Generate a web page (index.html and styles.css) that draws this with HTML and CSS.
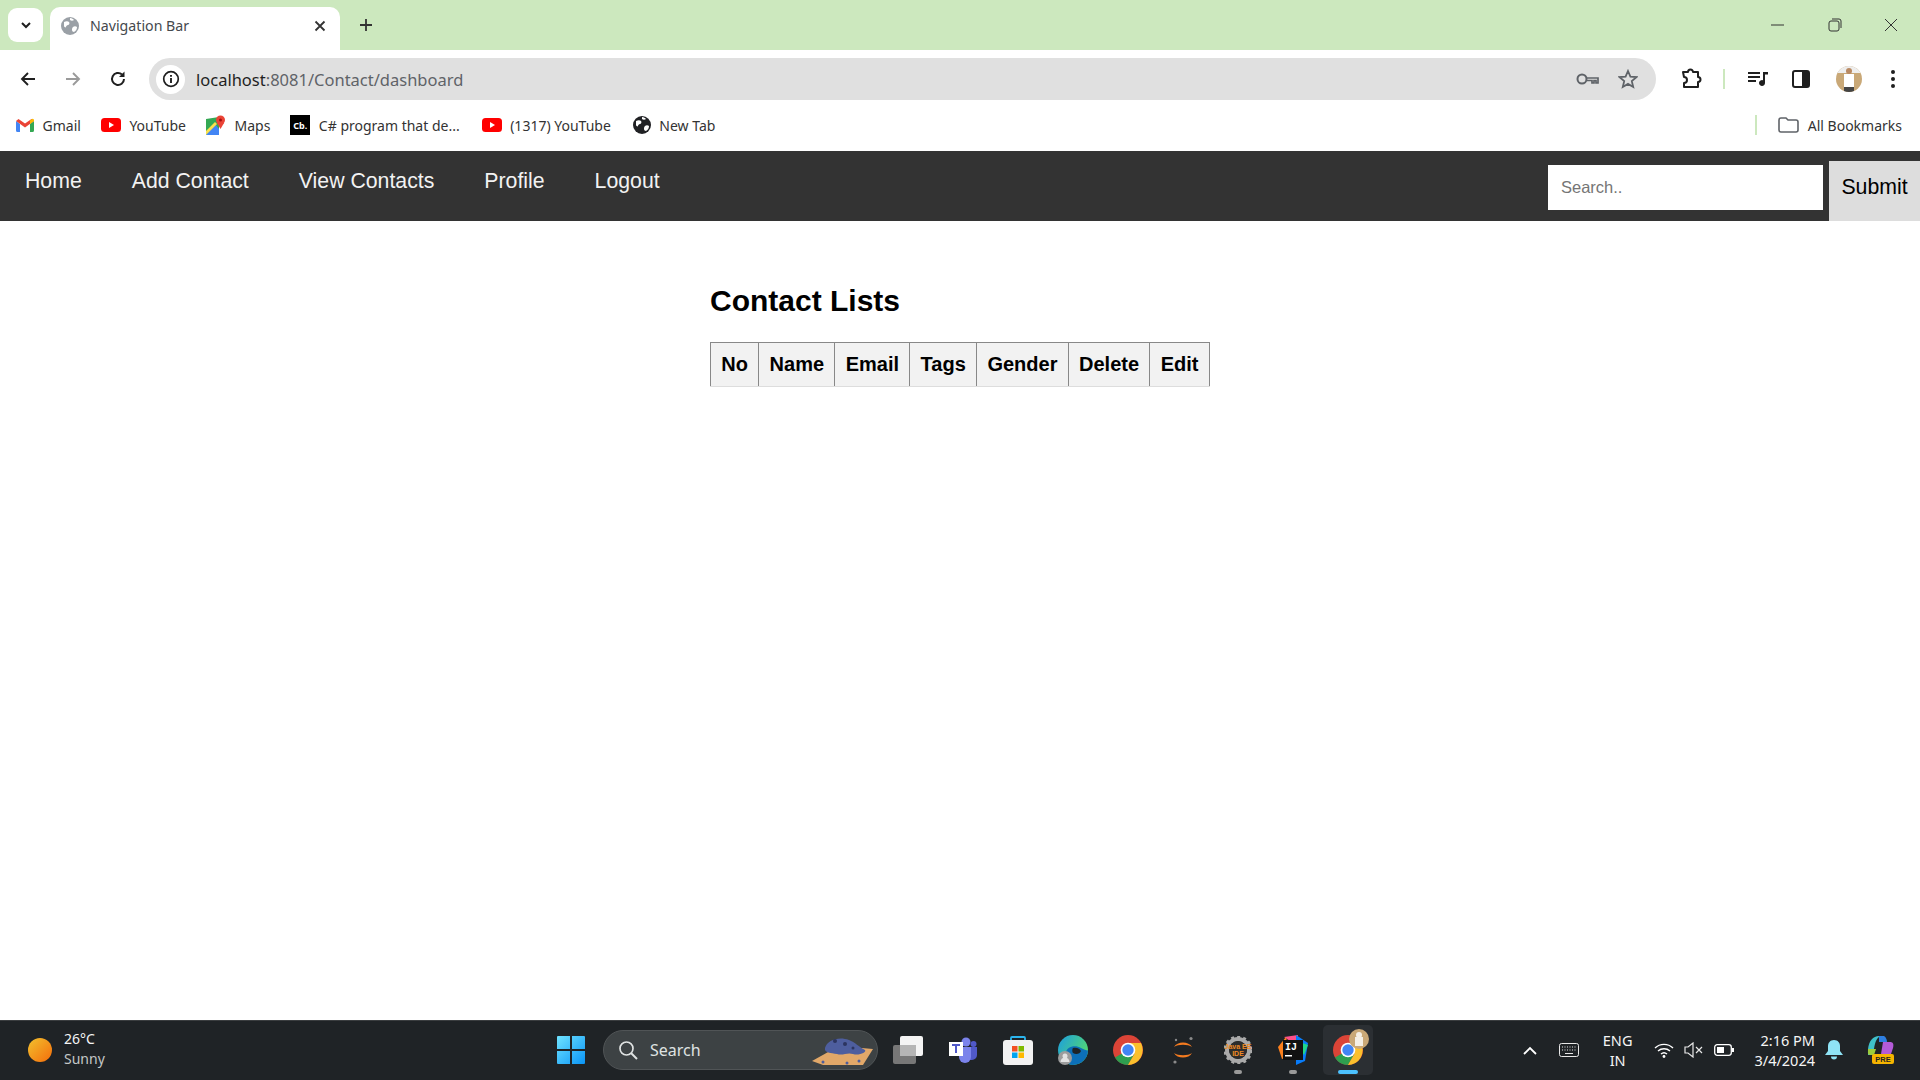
FILE: index.html
```html
<!DOCTYPE html>
<html lang="en">
<head>
  <meta charset="UTF-8">
  <title>Navigation Bar</title>
  <link rel="stylesheet" href="styles.css">
</head>
<body>

<svg class="defs" width="0" height="0">
  <symbol id="yt" viewBox="0 0 20 14">
    <rect width="20" height="14" rx="3.5" fill="#f00"/>
    <path d="M8 4l5 3-5 3z" fill="#fff"/>
  </symbol>
  <symbol id="chrome" viewBox="0 0 30 30">
    <circle cx="15" cy="15" r="15" fill="#db4437"/>
    <path d="M8.5 18.7L2 22.5A15 15 0 0 0 15 30l6.5-11.3z" fill="#2e9e4f"/>
    <path d="M15 8h13a15 15 0 0 1-13 22l6.500-11.300z" fill="#fbc02d"/>
    <circle cx="15" cy="15" r="7.3" fill="#fff"/>
    <circle cx="15" cy="15" r="5.7" fill="#4285f4"/>
  </symbol>
  <symbol id="globe" viewBox="0 0 18 18">
    <circle cx="9" cy="9" r="9"/>
    <path d="M3 5c2-1 4-1 5 0s0 3-1 3-2 1-2 2-2 0-2-1zM12 10c1-1 3-1 4 0 0 2-1 4-3 5-1 0-2-1-2-2s0-2 1-3zM9 1c2 0 3 1 4 2-1 1-3 1-4 0z" fill="#fff"/>
  </symbol>
</svg>

<div class="tabstrip">
  <div class="tab-search">
    <svg width="14" height="14" viewBox="0 0 14 14"><path d="M3 5l4 4 4-4" fill="none" stroke="#1f1f1f" stroke-width="2"/></svg>
  </div>
  <div class="tab">
    <svg class="tab-icon" width="18" height="18"><use href="#globe"/></svg>
    <span class="tab-title">Navigation Bar</span>
    <svg class="tab-close" width="12" height="12" viewBox="0 0 12 12"><path d="M1.5 1.5l9 9M10.5 1.5l-9 9" stroke="#333" stroke-width="1.8"/></svg>
  </div>
  <svg class="tab-new" width="14" height="14" viewBox="0 0 14 14"><path d="M7 1v12M1 7h12" stroke="#333" stroke-width="1.8"/></svg>
  <div class="window-btns">
    <svg width="14" height="14" viewBox="0 0 14 14"><path d="M0 7h13" stroke="#333"/></svg>
    <svg width="14" height="14" viewBox="0 0 14 14"><rect x="1" y="3" width="10" height="10" rx="2" fill="none" stroke="#333"/><path d="M4 1h7a2 2 0 0 1 2 2v7" fill="none" stroke="#333"/></svg>
    <svg width="14" height="14" viewBox="0 0 14 14"><path d="M1 1l12 12M13 1L1 13" stroke="#333"/></svg>
  </div>
</div>

<div class="toolbar">
  <svg class="tool-icon" width="18" height="18" viewBox="0 0 18 18"><path d="M16 9H3M9 3L3 9l6 6" fill="none" stroke="#1f1f1f" stroke-width="1.9"/></svg>
  <svg class="tool-icon" width="18" height="18" viewBox="0 0 18 18"><path d="M2 9h13M9 3l6 6-6 6" fill="none" stroke="#9a9a9a" stroke-width="1.9"/></svg>
  <svg class="tool-icon" width="18" height="18" viewBox="0 0 18 18"><path d="M15 9a6 6 0 1 1-2-4.500" fill="none" stroke="#1f1f1f" stroke-width="2"/><path d="M15.5 1.5V7H10z" fill="#1f1f1f"/></svg>
  <div class="omnibox">
    <div class="site-info">
      <svg width="18" height="18" viewBox="0 0 18 18"><circle cx="9" cy="9" r="7.3" fill="none" stroke="#1f1f1f" stroke-width="1.7"/><path d="M9 8v5M9 5v1.800" stroke="#1f1f1f" stroke-width="1.9"/></svg>
    </div>
    <div class="url"><span class="url-host">localhost</span>:8081/Contact/dashboard</div>
    <svg class="omni-key" width="23" height="14" viewBox="0 0 23 14"><circle cx="6" cy="7" r="4.5" fill="none" stroke="#5f6368" stroke-width="2"/><path d="M10.5 6H22v5h-2V8.500h-2V11h-2V8.500h-5.500" fill="none" stroke="#5f6368" stroke-width="1.7"/></svg>
    <svg class="omni-star" width="20" height="20" viewBox="0 0 20 20"><path d="M10 2l2.400 5.600 6 .5-4.600 4 1.400 5.900L10 14.900 4.800 18l1.400-5.900-4.600-4 6-.5z" fill="none" stroke="#5f6368" stroke-width="1.8"/></svg>
  </div>
  <div class="tool-right">
    <svg class="ext" width="22" height="22" viewBox="0 0 22 22"><path d="M3 4h5a2.500 2.500 0 0 1 5 0h5v5a2.500 2.500 0 0 1 0 5v5H4v-4a2.500 2.500 0 0 0 0-6z" fill="none" stroke="#1f1f1f" stroke-width="2" stroke-linejoin="round"/></svg>
    <span class="tool-sep"></span>
    <svg class="media" width="20" height="16" viewBox="0 0 20 16"><path d="M0 2h12M0 6h12M0 10h8" stroke="#1f1f1f" stroke-width="1.8"/><path d="M15 1h5v2.500h-3V12a3 3 0 1 1-2-2.800z" fill="#1f1f1f"/></svg>
    <svg class="panel" width="18" height="18" viewBox="0 0 18 18"><rect x="1" y="1" width="16" height="16" rx="2" fill="#fff" stroke="#1f1f1f" stroke-width="2"/><path d="M10 1h5a2 2 0 0 1 2 2v12a2 2 0 0 1-2 2h-5z" fill="#1f1f1f"/></svg>
    <svg class="avatar" width="26" height="26" viewBox="0 0 26 26"><defs><clipPath id="av"><circle cx="13" cy="13" r="13"/></clipPath></defs><g clip-path="url(#av)"><rect width="26" height="26" fill="#c9a877"/><rect width="26" height="7" fill="#eee"/><rect x="8" y="8" width="10" height="13" fill="#fff"/><circle cx="13" cy="5" r="3" fill="#b98a63"/><rect x="8" y="21" width="10" height="5" fill="#444"/></g></svg>
    <svg class="kebab" width="6" height="20" viewBox="0 0 6 20"><circle cx="3" cy="3" r="2" fill="#1f1f1f"/><circle cx="3" cy="10" r="2" fill="#1f1f1f"/><circle cx="3" cy="17" r="2" fill="#1f1f1f"/></svg>
  </div>
</div>

<div class="bookmarks">
  <a class="bm">
    <svg width="18" height="14" viewBox="0 0 18 14"><path d="M0 3v9.500A1.500 1.500 0 0 0 1.500 14H4V6z" fill="#4285f4"/><path d="M18 3v9.500a1.500 1.500 0 0 1-1.500 1.500H14V6z" fill="#34a853"/><path d="M0 3l9 6.500L18 3 15.500 1 9 5.500 2.500 1z" fill="#ea4335"/><path d="M14 2.500L16 1a1.300 1.300 0 0 1 2 1v1l-4 3z" fill="#fbbc04"/></svg>
    Gmail
  </a>
  <a class="bm"><svg width="20" height="14"><use href="#yt"/></svg>YouTube</a>
  <a class="bm">
    <svg width="20" height="20" viewBox="0 0 20 20"><path d="M0 4l13-2v16L0 20z" fill="#34a853"/><path d="M0 20L9 9l4 5v6z" fill="#4285f4"/><path d="M0 16L9 7l2 2-11 11z" fill="#fbe04d"/><circle cx="14.5" cy="5" r="4.5" fill="#ea4335"/><path d="M11 8l3.500 6 3.500-6z" fill="#ea4335"/><circle cx="14.5" cy="5" r="1.5" fill="#a50e0e"/></svg>
    Maps
  </a>
  <a class="bm bm-wide"><span class="cb-icon">Cb.</span>C# program that de...</a>
  <a class="bm bm-wide"><svg width="20" height="14"><use href="#yt"/></svg>(1317) YouTube</a>
  <a class="bm"><svg class="globe-dark" width="18" height="18"><use href="#globe"/></svg>New Tab</a>
  <span class="bm-sep"></span>
  <a class="bm bm-all">
    <svg width="21" height="16" viewBox="0 0 21 16"><path d="M1 3a2 2 0 0 1 2-2h5l2 2h8a2 2 0 0 1 2 2v8a2 2 0 0 1-2 2H3a2 2 0 0 1-2-2z" fill="none" stroke="#5f6368" stroke-width="1.6"/></svg>
    All Bookmarks
  </a>
</div>

<div class="topnav">
  <a href="#">Home</a>
  <a href="#">Add Contact</a>
  <a href="#">View Contacts</a>
  <a href="#">Profile</a>
  <a href="#">Logout</a>
  <form class="search-form">
    <input type="text" placeholder="Search..">
    <button type="button">Submit</button>
  </form>
</div>

<div class="content">
  <h2>Contact Lists</h2>
  <table>
    <tr>
      <th>No</th>
      <th>Name</th>
      <th>Email</th>
      <th>Tags</th>
      <th>Gender</th>
      <th>Delete</th>
      <th>Edit</th>
    </tr>
  </table>
</div>

<div class="taskbar">
  <div class="weather">
    <span class="sun"></span>
    <div class="weather-text">
      <div>26°C</div>
      <div class="weather-sub">Sunny</div>
    </div>
  </div>

  <div class="task-center">
    <div class="task-slot">
      <svg width="30" height="30" viewBox="0 0 30 30">
        <defs><linearGradient id="win" x1="0" y1="0" x2="1" y2="1"><stop offset="0" stop-color="#6fe3ff"/><stop offset="1" stop-color="#0a94f5"/></linearGradient></defs>
        <path d="M1 2a1 1 0 0 1 1-1h12v13H1zM16 1h12a1 1 0 0 1 1 1v12H16zM1 16h13v13H2a1 1 0 0 1-1-1zM16 16h13v12a1 1 0 0 1-1 1H16z" fill="url(#win)"/>
      </svg>
    </div>
    <div class="task-search">
      <svg width="20" height="20" viewBox="0 0 20 20"><circle cx="8.5" cy="8.5" r="6.5" fill="none" stroke="#dfe2e2" stroke-width="1.7"/><path d="M13 13l6 6" stroke="#dfe2e2" stroke-width="1.9"/></svg>
      <span>Search</span>
      <svg class="pebble" width="64" height="32" viewBox="0 0 64 32">
        <path d="M1 27L28 12l34 3-10 16H12z" fill="#e2a869"/>
        <path d="M14 14c2-8 14-12 24-8 6 2 10 7 16 10 2 2-6 6-12 4-6-2-10 2-16 0-6-1-13-1-12-6z" fill="#4e5e9e"/>
        <circle cx="24" cy="7" r="2" fill="#2c3560"/><circle cx="34" cy="10" r="2" fill="#2c3560"/><circle cx="42" cy="14" r="1.5" fill="#2c3560"/>
        <circle cx="12" cy="28" r="1.5" fill="#4e5e9e"/><circle cx="36" cy="29" r="1.5" fill="#4e5e9e"/><circle cx="48" cy="27" r="1.5" fill="#4e5e9e"/>
      </svg>
    </div>
    <div class="task-slot">
      <svg width="30" height="28" viewBox="0 0 30 28">
        <rect x="0" y="9" width="23" height="19" rx="2" fill="#777"/>
        <rect x="7" y="0" width="23" height="20" rx="2" fill="#f4f4f4"/>
        <rect x="7" y="9" width="16" height="11" fill="#b5b5b5"/>
      </svg>
    </div>
    <div class="task-slot">
      <svg width="28" height="26" viewBox="0 0 28 26">
        <circle cx="17" cy="5" r="4.500" fill="#7b83eb"/><circle cx="24.500" cy="7" r="3" fill="#5059c9"/>
        <path d="M11 10h17v8a5 5 0 0 1-5 5h-2a7 7 0 0 1-10-5z" fill="#5059c9"/>
        <path d="M10 10h12v10a6 6 0 0 1-12 0z" fill="#7b83eb"/>
        <rect x="0" y="5" width="14" height="14" fill="#fff"/>
        <path d="M3 8h8M7 8v8" stroke="#5059c9" stroke-width="2"/>
      </svg>
    </div>
    <div class="task-slot">
      <svg width="30" height="30" viewBox="0 0 30 30">
        <path d="M8 7V3a1 1 0 0 1 1-1h12a1 1 0 0 1 1 1v4" fill="none" stroke="#2bb5ee" stroke-width="1.8"/>
        <rect x="0" y="5" width="30" height="25" rx="3" fill="#f2f2f2"/>
        <rect x="9" y="11" width="5.5" height="5.5" fill="#f25022"/><rect x="15.5" y="11" width="5.5" height="5.5" fill="#7fba00"/>
        <rect x="9" y="17.5" width="5.5" height="5.5" fill="#00a4ef"/><rect x="15.5" y="17.5" width="5.5" height="5.5" fill="#ffb900"/>
      </svg>
    </div>
    <div class="task-slot">
      <svg width="30" height="30" viewBox="0 0 30 30">
        <defs><linearGradient id="edge" x1="0" y1="0" x2="1" y2="0.6"><stop offset="0" stop-color="#1b9de2"/><stop offset="1" stop-color="#54d96e"/></linearGradient></defs>
        <circle cx="15" cy="15" r="15" fill="url(#edge)"/>
        <path d="M8 18c0-6 9-9 15-5 4 2 7 3 7 2a15 15 0 0 1-15 15C8 30 8 24 8 18z" fill="#0c6fb8"/>
        <path d="M15 13c4-1 7 1 8 3-1 3-5 4-8 2-1-1-1-4 0-5z" fill="#1f2326"/>
        <circle cx="7" cy="23" r="7" fill="#9c9c9c"/><circle cx="7" cy="21" r="2.500" fill="#e2e2e2"/><path d="M2.500 27a4.500 4.500 0 0 1 9 0z" fill="#e2e2e2"/>
      </svg>
    </div>
    <div class="task-slot"><svg width="30" height="30"><use href="#chrome"/></svg></div>
    <div class="task-slot">
      <svg width="22" height="28" viewBox="0 0 22 28">
        <path d="M2 11c3-6 15-6 18 0-4-3-14-3-18 0zM2 17c4 3 14 3 18 0-3 6-15 6-18 0z" fill="#f47b20"/>
        <circle cx="19" cy="2.500" r="1.6" fill="#8a8a8a"/><circle cx="4" cy="4" r="1.2" fill="#8a8a8a"/><circle cx="3" cy="26" r="1.6" fill="#8a8a8a"/>
      </svg>
    </div>
    <div class="task-slot running">
      <svg width="28" height="28" viewBox="0 0 28 28">
        <circle cx="14" cy="14" r="11" fill="none" stroke="#aaa" stroke-width="4"/>
        <circle cx="14" cy="14" r="13" fill="none" stroke="#aaa" stroke-width="3" stroke-dasharray="3 3"/>
        <circle cx="14" cy="14" r="9" fill="#2c2c2c"/>
        <text x="14" y="12.500" class="ee-text">Java EE</text>
        <text x="14" y="20" class="ee-text">IDE</text>
      </svg>
    </div>
    <div class="task-slot running">
      <svg width="30" height="30" viewBox="0 0 30 30">
        <path d="M6 2L20 0l-2 10z" fill="#ff4f8b"/><path d="M0 12L8 2l4 20-8 2z" fill="#fc801d"/><path d="M18 0l12 8-3 18-9 4z" fill="#087cfa"/><path d="M16 5l14 5-4 10z" fill="#21d789"/>
        <rect x="5" y="5" width="20" height="20" fill="#111"/>
        <text x="7" y="15" class="ij-text">IJ</text>
        <rect x="7" y="20" width="7" height="1.500" fill="#fff"/>
      </svg>
    </div>
    <div class="task-slot active">
      <svg width="30" height="30"><use href="#chrome"/></svg>
      <svg class="chrome-badge" width="20" height="20" viewBox="0 0 20 20"><circle cx="10" cy="10" r="10" fill="#c9a877"/><rect x="6" y="8" width="8" height="9" fill="#f4efe6"/><circle cx="10" cy="6" r="3" fill="#f4efe6"/></svg>
    </div>
  </div>

  <div class="tray">
    <svg class="tray-chev" width="14" height="9" viewBox="0 0 14 9"><path d="M1 8l6-6 6 6" fill="none" stroke="#fff" stroke-width="1.8"/></svg>
    <svg class="tray-kbd" width="20" height="14" viewBox="0 0 20 14"><rect x=".5" y=".5" width="19" height="13" rx="2" fill="none" stroke="#e8e8e8"/><path d="M3 4h14M3 7h14" stroke="#e8e8e8" stroke-dasharray="1 1.500"/><path d="M6 10.500h8" stroke="#e8e8e8"/></svg>
    <div class="tray-lang">ENG<br>IN</div>
    <svg class="tray-wifi" width="20" height="16" viewBox="0 0 20 16"><path d="M1 6a13 13 0 0 1 18 0M4 9a9 9 0 0 1 12 0M7 12a4.500 4.500 0 0 1 6 0" fill="none" stroke="#fff" stroke-width="1.4"/><circle cx="10" cy="14.500" r="1.400" fill="#fff"/></svg>
    <svg class="tray-mute" width="20" height="16" viewBox="0 0 20 16"><path d="M1 5h3l5-4v14l-5-4H1z" fill="none" stroke="#e8e8e8" stroke-width="1.2"/><path d="M12 5l6 6M18 5l-6 6" stroke="#e8e8e8" stroke-width="1.2"/></svg>
    <svg class="tray-batt" width="20" height="12" viewBox="0 0 20 12"><rect x=".7" y=".7" width="16.600" height="10.600" rx="2.500" fill="none" stroke="#fff" stroke-width="1.3"/><rect x="3" y="3" width="7" height="6" fill="#fff"/><rect x="18" y="4" width="2" height="4" fill="#fff"/></svg>
    <div class="tray-clock">2:16 PM<br>3/4/2024</div>
    <svg class="tray-bell" width="18" height="20" viewBox="0 0 18 20"><path d="M9 0c4 0 6 3 6 6v5l3 4H0l3-4V6c0-3 2-6 6-6z" fill="#8fe3f5"/><path d="M6 16.500h6a3 3 0 0 1-6 0z" fill="#8fe3f5"/></svg>
    <svg class="tray-copilot" width="30" height="30" viewBox="0 0 30 30">
      <path d="M3 14C4 6 8 1 14 1l2 0c-4 1-6 6-7 13-1 5-2 6-6 6z" fill="#3fc1c9"/>
      <path d="M3 14c0 6-1 6 6 6l2-6z" fill="#9ccc3c"/>
      <path d="M14 1h5c2 1 3 4 3 6l-8 0z" fill="#2e7fe0"/>
      <path d="M18 7h7c3 0 4 2 3 6l-2 6H16z" fill="#b45bd8"/>
      <rect x="7" y="19" width="22" height="10" rx="2" fill="#f5b400"/>
      <text x="18" y="27" class="pre-text">PRE</text>
    </svg>
  </div>
</div>

</body>
</html>
```

FILE: styles.css
```css
* {
  box-sizing: border-box;
}

html, body {
  margin: 0;
  height: 1080px;
  overflow: hidden;
}

body {
  display: flex;
  flex-direction: column;
  background: white;
  font-family: "Liberation Sans", Arial, sans-serif;
}

.defs {
  position: absolute;
}

/* browser window */
.tabstrip {
  height: 50px;
  background: #cce8be;
  display: flex;
  align-items: flex-end;
  flex-shrink: 0;
}

.tab-search {
  width: 35px;
  height: 34px;
  margin: 0 7px 8px 8px;
  background: white;
  border-radius: 9px;
  display: flex;
  align-items: center;
  justify-content: center;
}

.tab {
  width: 290px;
  height: 43px;
  padding: 0 14px 6px 11px;
  background: white;
  border-radius: 10px 10px 0 0;
  display: flex;
  align-items: center;
  font-family: "Noto Sans", sans-serif;
  font-size: 14.2px;
  color: #45494e;
}

.tab-icon {
  fill: #9aa0a6;
  margin-right: 11px;
}

.tab-title {
  flex: 1;
}

.tab-new {
  margin: 0 0 18px 19px;
}

.window-btns {
  margin-left: auto;
  width: 149px;
  height: 50px;
  padding: 18px 22px 0 0;
  display: flex;
  justify-content: space-between;
  align-self: flex-start;
}

.toolbar {
  height: 50px;
  padding: 8px 0 0 19px;
  background: white;
  border-radius: 8px 8px 0 0;
  display: flex;
  align-items: flex-start;
  flex-shrink: 0;
}

.tool-icon {
  margin: 12px 27px 0 0;
}

.tool-icon:nth-child(3) {
  margin-right: 0;
}

.omnibox {
  margin-left: 22px;
  width: 1507px;
  height: 42px;
  background: #e0e0e0;
  border-radius: 21px;
  padding: 0 18px 0 7px;
  display: flex;
  align-items: center;
}

.site-info {
  width: 29px;
  height: 29px;
  background: white;
  border-radius: 50%;
  display: flex;
  align-items: center;
  justify-content: center;
  margin-right: 11px;
}

.url {
  flex: 1;
  font-family: "Noto Sans", sans-serif;
  font-size: 16.5px;
  color: #5f6368;
}

.url-host {
  color: #1f1f1f;
}

.omni-star {
  margin-left: 19px;
}

.tool-right {
  flex: 1;
  display: flex;
  align-items: center;
  height: 42px;
}

.ext {
  margin-left: 24px;
}

.tool-sep {
  width: 2px;
  height: 20px;
  background: #cce8be;
  margin: 0 23px 0 21px;
}

.panel {
  margin-left: 24px;
}

.avatar {
  margin-left: 26px;
}

.kebab {
  margin-left: 28px;
}

.bookmarks {
  height: 51px;
  padding: 0 18px 1px 16px;
  background: white;
  display: flex;
  align-items: center;
  flex-shrink: 0;
  font-family: "Noto Sans", sans-serif;
  font-size: 14px;
  color: #333;
}

.bm {
  display: flex;
  align-items: center;
  gap: 8.5px;
  margin-right: 20px;
  white-space: nowrap;
}

.bm-wide {
  margin-right: 22px;
}

.cb-icon {
  width: 20px;
  height: 20px;
  background: black;
  color: white;
  font-size: 9px;
  font-weight: bold;
  display: flex;
  align-items: center;
  justify-content: center;
}

.globe-dark {
  fill: #202124;
}

.bm-sep {
  margin-left: auto;
  width: 2px;
  height: 20px;
  background: #cce8be;
  margin-right: 21px;
}

.bm-all {
  margin-right: 0;
}

/* the actual page */
.topnav {
  height: 70px;
  background-color: #333;
  display: flex;
  flex-shrink: 0;
}

.topnav a {
  padding: 18px 25px;
  color: #f2f2f2;
  font-size: 21.28px;
  text-decoration: none;
}

.search-form {
  margin-left: auto;
  display: flex;
  align-items: flex-start;
  padding-top: 10px;
}

.search-form input {
  width: 275px;
  height: 45px;
  margin: 4px 6px 0 0;
  padding: 0 13px;
  border: none;
  font-family: inherit;
  font-size: 16.5px;
}

.search-form button {
  width: 91px;
  height: 60px;
  border: none;
  background: #ddd;
  padding: 0 0 8px;
  font-family: inherit;
  font-size: 21.28px;
  color: black;
}

.content {
  width: 502px;
  margin: 0 auto;
  flex: 1;
  padding-top: 62px;
}

h2 {
  margin: 0 0 23px;
  font-size: 30px;
  line-height: 36px;
  padding-left: 1px;
}

table {
  border-collapse: collapse;
  margin-left: 1px;
}

th {
  padding: 10px 10.3px;
  font-size: 20px;
  background: #f2f2f2;
  border: 1px solid #888;
  border-bottom-color: #ddd;
}

/* windows taskbar */
.taskbar {
  height: 60px;
  padding-bottom: 1px;
  flex-shrink: 0;
  background: #1f2326;
  border-top: 1px solid #3a3d3f;
  display: flex;
  align-items: center;
  position: relative;
  font-family: "Noto Sans", sans-serif;
  font-size: 14px;
  color: #f5f5f5;
}

.weather {
  display: flex;
  align-items: center;
  gap: 12px;
  margin-left: 28px;
  width: 515px;
}

.sun {
  width: 24px;
  height: 24px;
  border-radius: 50%;
  background: linear-gradient(135deg, #f2c12e, #f46d0b);
}

.weather-text {
  line-height: 20px;
  margin-top: -2px;
}

.weather-sub {
  color: #c4c7c7;
}

.task-center {
  display: flex;
  align-items: center;
}

.task-search {
  width: 275px;
  height: 40px;
  margin: 0 2px 0 5px;
  padding: 0 0 0 14px;
  background: #3d4244;
  border: 1px solid #505456;
  border-radius: 20px;
  display: flex;
  align-items: center;
  gap: 12px;
  font-size: 16px;
  color: #dfe2e2;
  overflow: hidden;
}

.pebble {
  margin-left: auto;
  margin-right: 2px;
}

.task-slot {
  width: 55px;
  height: 50px;
  display: flex;
  align-items: center;
  justify-content: center;
  position: relative;
}

.running::after {
  content: "";
  position: absolute;
  bottom: 1px;
  left: 24px;
  width: 8px;
  height: 4px;
  border-radius: 2px;
  background: #9a9a9a;
}

.active {
  background: #2b2f33;
  border-radius: 5px;
  width: 50px;
  margin: 0 2.5px;
}

.active::after {
  content: "";
  position: absolute;
  bottom: 1px;
  left: 15px;
  width: 20px;
  height: 4px;
  border-radius: 2px;
  background: #4cc2ff;
}

.chrome-badge {
  position: absolute;
  top: 4px;
  right: 4px;
}

.ee-text {
  font-family: "Liberation Sans", sans-serif;
  font-size: 7px;
  font-weight: bold;
  fill: #f08a24;
  text-anchor: middle;
}

.ij-text {
  font-family: "Liberation Mono", monospace;
  font-size: 10px;
  font-weight: bold;
  fill: white;
}

.pre-text {
  font-family: "Liberation Sans", sans-serif;
  font-size: 7.5px;
  font-weight: bold;
  fill: #222;
  text-anchor: middle;
}

.tray {
  margin-left: auto;
  display: flex;
  align-items: center;
  padding-right: 25px;
  font-size: 14.5px;
}

.tray-kbd {
  margin-left: 22px;
}

.tray-lang {
  margin: 0 22px 0 24px;
  text-align: center;
  line-height: 20px;
}

.tray-mute {
  margin-left: 10px;
}

.tray-batt {
  margin-left: 10px;
}

.tray-clock {
  margin-left: 20px;
  text-align: right;
  line-height: 20px;
}

.tray-bell {
  margin-left: 10px;
}

.tray-copilot {
  margin-left: 22px;
}
```
